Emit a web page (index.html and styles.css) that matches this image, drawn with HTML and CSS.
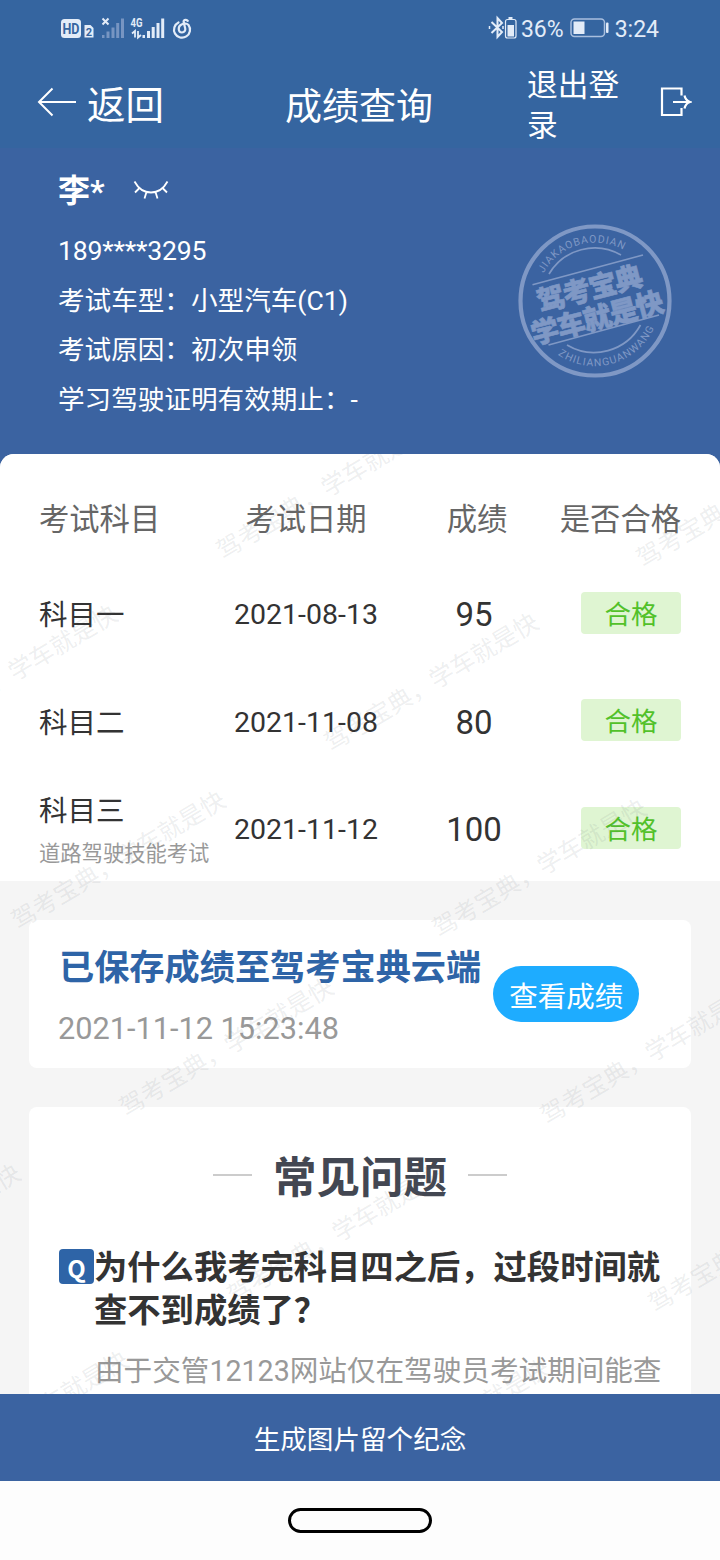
FILE: index.html
```html
<!DOCTYPE html>
<html lang="zh-CN">

<head>
    <meta charset="UTF-8">
    <meta name="viewport" content="width=device-width, initial-scale=1.0">
    <title>成绩查询</title>
    <link rel="stylesheet" href="styles.css">
</head>

<body>
    <div class="top">
        <div class="status">
            <svg class="status-left" width="140" height="30" viewBox="0 0 140 30">
                <rect x="1" y="5" width="20" height="19" rx="3.5" fill="#e3ecf8" />
                <text x="2.500" y="19.500" class="hd" textLength="17" lengthAdjust="spacingAndGlyphs">HD</text>
                <path d="M24.500 11h6l3 3v9.500h-9z" fill="#e3ecf8" />
                <text x="29" y="21.500" class="sim" text-anchor="middle">2</text>
                <path d="M42.500 4.500l6 6M48.500 4.500l-6 6" stroke="#e3ecf8" stroke-width="2" />
                <g fill="#7795c2">
                    <rect x="42" y="21" width="2.500" height="3" />
                    <rect x="46.500" y="17.500" width="3" height="6.500" />
                    <rect x="51.500" y="13.500" width="3" height="10.500" />
                    <rect x="56.200" y="9" width="3" height="15" />
                    <rect x="61" y="4.500" width="3" height="19.500" />
                </g>
                <text x="70.500" y="13" class="net" textLength="12" lengthAdjust="spacingAndGlyphs">4G</text>
                <path d="M75 23.500v-6.500l-3 2.500M78 17v6.500l3-2.500" fill="none" stroke="#e3ecf8" stroke-width="1.800" />
                <g fill="#e3ecf8">
                    <rect x="82.500" y="21" width="2.500" height="3" />
                    <rect x="87" y="17" width="3" height="7" />
                    <rect x="91.700" y="13" width="3" height="11" />
                    <rect x="96.500" y="9" width="3" height="15" />
                    <rect x="101.200" y="4.500" width="3" height="19.500" />
                </g>
                <path d="M118.500 8.500A8 8 0 1 0 128.500 11C127 9.300 124 9.300 121.500 10.500C117.500 12.500 118 18.500 122 18.500C124.500 18.500 125.700 16.500 125.200 14.300L123.800 9C123 6 125.500 5 127.800 6.800" fill="none" stroke="#e3ecf8" stroke-width="2.200" stroke-linecap="round" />
            </svg>
            <div class="status-right">
                <svg width="30" height="26" viewBox="0 0 30 26">
                    <path d="M4.500 7l10.500 10-4.500 5V3l4.500 5L4.500 18" fill="none" stroke="#e3ecf8" stroke-width="2" />
                    <path d="M2.500 11v3M16 11v3" stroke="#e3ecf8" stroke-width="1.500" />
                    <rect x="21.500" y="2" width="4" height="2" fill="#e3ecf8" />
                    <rect x="18.500" y="4.500" width="10.500" height="18.500" rx="2" fill="none" stroke="#e3ecf8" stroke-width="1.200" />
                    <rect x="20.500" y="10" width="6.500" height="11.500" fill="#e3ecf8" />
                </svg>
                <span class="percent">36%</span>
                <svg width="40" height="20" viewBox="0 0 40 20">
                    <rect x="1" y="1" width="33.500" height="17.500" rx="3.500" fill="none" stroke="#a9bfde" stroke-width="1.500" />
                    <rect x="3.500" y="3.500" width="11" height="12.500" fill="#e3ecf8" />
                    <rect x="36" y="4.500" width="2.500" height="10.500" rx="1" fill="#e3ecf8" />
                </svg>
                <span class="clock">3:24</span>
            </div>
        </div>
        <div class="nav">
            <div class="back">
                <svg width="40" height="30" viewBox="0 0 40 30">
                    <path d="M39 15H2M15.500 1.500L2 15l13.500 13.500" fill="none" stroke="#fff" stroke-width="2" />
                </svg>
                <span>返回</span>
            </div>
            <h1 class="nav-title">成绩查询</h1>
            <div class="logout">
                <span>退出登录</span>
                <svg width="32" height="30" viewBox="0 0 32 30">
                    <path d="M21.500 8.500V1.500H2v26.500h19.500v-7M13 15h16M24.500 8.500q1 5 5.500 6.500-4.500 1.500-5.500 6.500" fill="none" stroke="#fff" stroke-width="2.200" />
                </svg>
            </div>
        </div>
    </div>

    <div class="profile">
        <div class="info">
            <div class="name">
                <span>李*</span>
                <svg width="36" height="20" viewBox="0 0 36 20">
                    <path d="M1.500 1.500q6 11 16.500 11t16.500-11M6.500 8l-4.500 4.500M13.500 12l-2 6.500M22.500 12l2 6.500M29.500 8l4.500 4.500" fill="none" stroke="#fff" stroke-width="1.800" />
                </svg>
            </div>
            <p class="phone">189****3295</p>
            <p>考试车型：小型汽车(C1)</p>
            <p>考试原因：初次申领</p>
            <p>学习驾驶证明有效期止：-</p>
        </div>
        <svg class="seal" width="156" height="156" viewBox="0 0 156 156">
            <defs>
                <path id="arc-top" d="M26.600 50.100A58.500 58.500 0 0 1 125 43.200" />
                <path id="arc-bottom" d="M41 131.800A65.300 65.300 0 0 0 141 94" />
            </defs>
            <circle cx="78" cy="78" r="74.500" fill="none" stroke="#7f98c5" stroke-width="4.200" />
            <g fill="none" stroke="#7f98c5" stroke-width="1.700">
                <path d="M32 51A53 53 0 0 1 104 32" />
                <path d="M50 122A53 53 0 0 0 123.500 102" />
                <path d="M15.500 61.700L126 32M31.500 122L142 92" />
            </g>
            <g class="seal-small">
                <text><textPath href="#arc-top" textLength="92">JIAKAOBAODIAN</textPath></text>
                <text><textPath href="#arc-bottom" textLength="113">ZHILIANGUANWANG</textPath></text>
            </g>
            <g class="seal-big" transform="rotate(-14.500 78 78)">
                <text x="76" y="75" text-anchor="middle" textLength="108">驾考宝典</text>
                <text x="76" y="105" text-anchor="middle" textLength="136">学车就是快</text>
            </g>
        </svg>
    </div>

    <div class="content">
        <div class="scores">
            <div class="row head">
                <span>考试科目</span>
                <span>考试日期</span>
                <span>成绩</span>
                <span>是否合格</span>
            </div>
            <div class="row">
                <div class="subject">科目一</div>
                <span class="date">2021-08-13</span>
                <span class="score">95</span>
                <span class="pass">合格</span>
            </div>
            <div class="row">
                <div class="subject">科目二</div>
                <span class="date">2021-11-08</span>
                <span class="score">80</span>
                <span class="pass">合格</span>
            </div>
            <div class="row">
                <div class="subject detail">科目三<small>道路驾驶技能考试</small></div>
                <span class="date">2021-11-12</span>
                <span class="score">100</span>
                <span class="pass">合格</span>
            </div>
        </div>

        <div class="card saved">
            <div>
                <h2>已保存成绩至驾考宝典云端</h2>
                <p>2021-11-12 15:23:48</p>
            </div>
            <button class="view">查看成绩</button>
        </div>

        <div class="card faq">
            <h2 class="faq-title">常见问题</h2>
            <div class="question">
                <span class="q">Q</span>
                <h3>为什么我考完科目四之后，过段时间就查不到成绩了？</h3>
            </div>
            <p class="answer">由于交管12123网站仅在驾驶员考试期间能查</p>
        </div>

        <!-- watermark -->
        <svg class="watermark" width="720" height="940" viewBox="0 454 720 940">
            <text transform="translate(223 560) rotate(-30.800)">驾考宝典，学车就是快</text>
            <text transform="translate(643 568) rotate(-30.800)">驾考宝典，学车就是快</text>
            <text transform="translate(-90 744) rotate(-30.800)">驾考宝典，学车就是快</text>
            <text transform="translate(331 752) rotate(-30.800)">驾考宝典，学车就是快</text>
            <text transform="translate(18 930) rotate(-30.800)">驾考宝典，学车就是快</text>
            <text transform="translate(439 938) rotate(-30.800)">驾考宝典，学车就是快</text>
            <text transform="translate(126 1117) rotate(-30.800)">驾考宝典，学车就是快</text>
            <text transform="translate(547 1125) rotate(-30.800)">驾考宝典，学车就是快</text>
            <text transform="translate(-187 1303) rotate(-30.800)">驾考宝典，学车就是快</text>
            <text transform="translate(234 1305) rotate(-30.800)">驾考宝典，学车就是快</text>
            <text transform="translate(655 1313) rotate(-30.800)">驾考宝典，学车就是快</text>
            <text transform="translate(-79 1490) rotate(-30.800)">驾考宝典，学车就是快</text>
            <text transform="translate(342 1498) rotate(-30.800)">驾考宝典，学车就是快</text>
        </svg>
    </div>

    <div class="share">生成图片留个纪念</div>
    <div class="home"><i></i></div>
</body>

</html>
```
FILE: styles.css
```css
* {
    box-sizing: border-box;
    margin: 0;
    padding: 0;
}

body {
    display: flex;
    flex-direction: column;
    width: 720px;
    height: 1560px;
    overflow: hidden;
    background-color: #3b63a1;
    color: #333;
    font-family: Roboto, "Noto Sans CJK SC", sans-serif;
}

svg {
    display: block;
    flex: none;
}

.top {
    height: 148px;
    background-color: #3565a0;
    color: #fff;
}

.status {
    display: flex;
    justify-content: space-between;
    height: 56px;
    padding: 14px 61px 0 60px;
    color: #e3ecf8;
}

.status-right {
    display: flex;
    align-items: center;
    height: 28px;
}

.percent {
    margin: 2px 6px 0 4px;
    font-size: 23px;
}

.clock {
    margin: 2px 0 0 5px;
    font-size: 23px;
}

.hd {
    fill: #3565a0;
    font-size: 14px;
    font-weight: 700;
}

.sim {
    fill: #3565a0;
    font-size: 11px;
    font-weight: 700;
}

.net {
    fill: #e3ecf8;
    font-size: 12.500px;
    font-weight: 700;
}

.nav {
    display: grid;
    grid-template-columns: 248px 149px 1fr;
    align-items: center;
    height: 92px;
    padding: 0 28px 0 37px;
}

.back {
    display: flex;
    align-items: center;
    gap: 10px;
    font-size: 38.500px;
    line-height: 56px;
}

.back span {
    padding-top: 7px;
}

.nav-title {
    padding-top: 3px;
    font-size: 37px;
    font-weight: 400;
    white-space: nowrap;
}

.logout {
    display: flex;
    align-items: center;
    justify-content: space-between;
    padding-left: 93px;
    font-size: 30.700px;
    line-height: 40px;
}

.logout span {
    width: 95px;
    padding-top: 7px;
}

.profile {
    display: flex;
    justify-content: space-between;
    height: 306px;
    padding: 17px 47px 0 58px;
    color: #fff;
}

.info p {
    font-size: 26.600px;
    line-height: 49.500px;
}

.info .phone {
    letter-spacing: -0.200px;
}

.name {
    display: flex;
    align-items: center;
    gap: 28px;
    height: 61px;
    padding-bottom: 12px;
    font-size: 32px;
    font-weight: 700;
}

.name span {
    padding-bottom: 4px;
}

.seal {
    margin-top: 58px;
}

.seal-small {
    fill: #7f98c5;
    font-size: 10.500px;
}

.seal-big {
    fill: #7f98c5;
    stroke: #7f98c5;
    stroke-width: 0.600px;
    font-size: 28px;
    font-weight: 900;
}

.content {
    position: relative;
    height: 940px;
    overflow: hidden;
    border-radius: 14px 14px 0 0;
    background-color: #f5f5f5;
}

.scores {
    height: 427px;
    background-color: #fff;
}

.row {
    display: grid;
    grid-template-columns: 172px 190px 152px 128px;
    align-items: center;
    justify-items: center;
    height: 107.500px;
    padding: 0 39px;
}

.row > :first-child {
    justify-self: start;
}

.row > :last-child {
    justify-self: end;
}

.head {
    height: 105px;
    padding-top: 20px;
    color: #666;
    font-size: 30.300px;
}

.subject {
    padding-top: 7px;
    font-size: 28.500px;
    line-height: 42px;
    white-space: nowrap;
}

.subject.detail {
    padding-top: 11px;
}

.subject small {
    display: block;
    color: #999;
    font-size: 21.300px;
}

.date {
    padding-top: 4px;
    font-size: 28.500px;
}

.score {
    padding: 4px 6px 0 0;
    font-size: 33px;
}

.pass {
    width: 100px;
    height: 42px;
    border-radius: 4px;
    background-color: #dff5d2;
    color: #52c12a;
    font-size: 26.500px;
    line-height: 46px;
    text-align: center;
}

.card {
    margin: 39px 29px 0;
    border-radius: 8px;
    background-color: #fff;
}

.saved {
    display: flex;
    align-items: center;
    height: 148px;
    padding-left: 30px;
}

.saved h2 {
    padding-top: 9px;
    color: #2e64a7;
    font-size: 35.200px;
    line-height: 60px;
}

.saved p {
    margin-left: -1px;
    color: #999;
    font-size: 30.700px;
    line-height: 62px;
}

.view {
    width: 146px;
    height: 56px;
    margin-left: 12px;
    padding-top: 3px;
    border: none;
    border-radius: 28px;
    background-color: #1eacff;
    color: #fff;
    font-family: inherit;
    font-size: 28.500px;
    line-height: 58px;
}

.faq {
    height: 320px;
    padding: 42px 30px 0;
}

.faq-title {
    display: flex;
    align-items: center;
    justify-content: center;
    gap: 21px;
    color: #434752;
    font-size: 43.500px;
    line-height: 60px;
}

.faq-title::before,
.faq-title::after {
    content: "";
    width: 39px;
    height: 2px;
    margin-top: -8px;
    background-color: #ccc;
}

.question {
    display: flex;
    align-items: flex-start;
    margin-top: 37px;
}

.q {
    flex: none;
    width: 35px;
    height: 35px;
    margin-top: 3px;
    border-radius: 4px;
    background-color: #2e64a7;
    color: #fff;
    font-family: "Noto Sans CJK SC", sans-serif;
    font-size: 24px;
    font-weight: 700;
    line-height: 37px;
    text-align: center;
}

.question h3 {
    width: 580px;
    margin-right: -20px;
    font-size: 33.300px;
    line-height: 43px;
}

.answer {
    margin: 18px 0 0 36px;
    color: #999;
    font-size: 28.600px;
    line-height: 42px;
    white-space: nowrap;
}

/* drawn over everything in the content area */
.watermark {
    position: absolute;
    top: 0;
    left: 0;
    fill: rgba(90, 100, 110, 0.110);
    font-size: 24.400px;
    pointer-events: none;
}

.share {
    height: 87px;
    background-color: #3b63a1;
    color: #fff;
    font-size: 26.600px;
    line-height: 91px;
    text-align: center;
}

.home {
    display: flex;
    flex: 1;
    justify-content: center;
    padding-top: 27px;
    background-color: #fdfdfd;
}

.home i {
    width: 144px;
    height: 25px;
    border: 3px solid #000;
    border-radius: 13px;
}
```
